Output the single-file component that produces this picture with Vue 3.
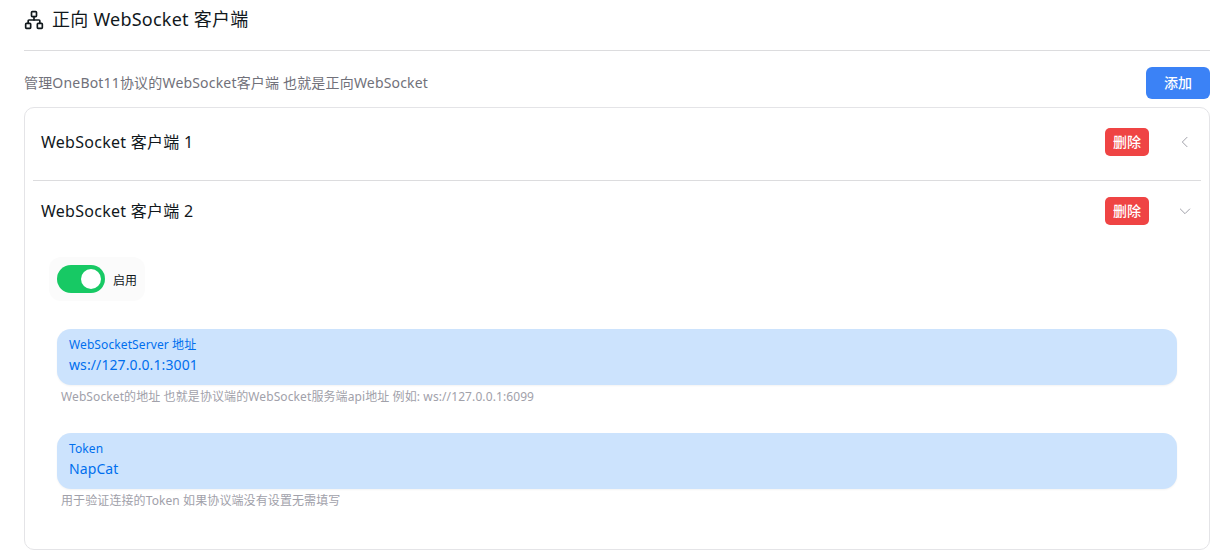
<script setup>
const clients = [
  { name: 'WebSocket 客户端 1', open: false },
  { name: 'WebSocket 客户端 2', open: true },
]
const fields = [
  { label: 'WebSocketServer 地址', value: 'ws://127.0.0.1:3001', hint: 'WebSocket的地址 也就是协议端的WebSocket服务端api地址 例如: ws://127.0.0.1:6099' },
  { label: 'Token', value: 'NapCat', hint: '用于验证连接的Token 如果协议端没有设置无需填写' },
]
</script>

<template>
  <div class="page">
    <div class="title">
      <svg class="title-icon" viewBox="0 0 24 24" fill="none" stroke="currentColor" stroke-width="2" stroke-linecap="round" stroke-linejoin="round">
        <rect x="9" y="2" width="6" height="6" rx="1" />
        <rect x="16" y="16" width="6" height="6" rx="1" />
        <rect x="2" y="16" width="6" height="6" rx="1" />
        <path d="M5 16v-3a1 1 0 0 1 1-1h12a1 1 0 0 1 1 1v3" />
        <path d="M12 12V8" />
      </svg>
      <span>正向 WebSocket 客户端</span>
    </div>
    <div class="desc-row">
      <span class="desc">管理OneBot11协议的WebSocket客户端 也就是正向WebSocket</span>
      <button class="btn-add">添加</button>
    </div>
    <div class="card">
      <div v-for="c in clients" :key="c.name" class="item">
        <div class="item-head">
          <span class="item-name">{{ c.name }}</span>
          <button class="btn-del">删除</button>
          <svg class="chevron" :class="{ open: c.open }" viewBox="0 0 24 24" fill="none" stroke="currentColor" stroke-width="1.5" stroke-linecap="round" stroke-linejoin="round">
            <path d="M15 5l-7 7 7 7" />
          </svg>
        </div>
        <div v-if="c.open" class="item-body">
          <div class="switch-wrap">
            <span class="switch"><span class="knob"></span></span>
            <span class="switch-label">启用</span>
          </div>
          <div v-for="f in fields" :key="f.label" class="field">
            <div class="input">
              <div class="input-label">{{ f.label }}</div>
              <div class="input-value">{{ f.value }}</div>
            </div>
            <div class="hint">{{ f.hint }}</div>
          </div>
        </div>
      </div>
    </div>
  </div>
</template>

<style>
html, body {
  margin: 0;
  background: #fff;
}
</style>

<style scoped>
.page {
  box-sizing: border-box;
  width: 1218px;
  height: 560px;
  padding: 0 8px 0 24px;
  overflow: hidden;
  font-family: "Noto Sans", "Noto Sans CJK SC", sans-serif;
  color: #11181c;
}
.title {
  height: 50px;
  display: flex;
  align-items: flex-start;
  gap: 8px;
  border-bottom: 1px solid #dcdcde;
  font-size: 18px;
  line-height: 39px;
  letter-spacing: 0.24px;
}
.title-icon {
  width: 20px;
  height: 20px;
  margin-top: 10px;
}
.desc-row {
  display: flex;
  align-items: center;
  justify-content: space-between;
  height: 32px;
  margin-top: 16px;
}
.desc {
  font-size: 14px;
  line-height: 20px;
  letter-spacing: 0.18px;
  color: #71717a;
}
button {
  border: none;
  font-family: inherit;
  font-weight: 500;
  color: #fff;
  padding: 0 0 2px;
}
.btn-add {
  width: 64px;
  height: 32px;
  border-radius: 6px;
  background: #3b82f6;
  font-size: 14px;
}
.card {
  box-sizing: border-box;
  height: 443px;
  margin-top: 8px;
  padding: 0 8px;
  border: 1px solid #e4e4e7;
  border-radius: 10px;
}
.item + .item {
  border-top: 1px solid #dcdcde;
}
.item-head {
  display: flex;
  align-items: center;
  height: 60px;
  padding: 0 8px;
}
.item:first-child .item-head {
  height: 68px;
  margin-bottom: 4px;
}
.item-name {
  flex: 1;
  margin-bottom: 2px;
  font-size: 16px;
  letter-spacing: 0.27px;
}
.btn-del {
  width: 44px;
  height: 28px;
  border-radius: 5px;
  background: #ef4444;
  font-size: 14px;
}
.chevron {
  width: 16px;
  height: 16px;
  margin-left: 28px;
  color: #a1a1aa;
}
.chevron.open {
  transform: rotate(-90deg);
}
.item-body {
  padding: 16px 24px 0 16px;
}
.switch-wrap {
  display: flex;
  align-items: center;
  gap: 8px;
  box-sizing: border-box;
  width: 96px;
  height: 44px;
  padding: 0 8px;
  border-radius: 12px;
  background: #fbfbfb;
}
.switch {
  display: flex;
  align-items: center;
  justify-content: flex-end;
  box-sizing: border-box;
  width: 48px;
  height: 28px;
  padding: 0 4px;
  border-radius: 14px;
  background: #17c964;
}
.knob {
  width: 20px;
  height: 20px;
  border-radius: 50%;
  background: #fff;
}
.switch-label {
  margin-top: 2px;
  font-size: 12px;
  color: #11181c;
}
.field {
  margin: 28px 0 0 8px;
}
.field + .field {
  margin-top: 26px;
}
.input {
  box-sizing: border-box;
  height: 56px;
  padding: 8px 12px;
  border-radius: 14px;
  background: #cce3fd;
  box-shadow: 0 1px 2px rgba(0, 0, 0, 0.05);
  color: #006fee;
}
.input-label {
  font-size: 12px;
  line-height: 16px;
  letter-spacing: 0.1px;
}
.input-value {
  font-size: 14px;
  line-height: 24px;
  letter-spacing: 0.1px;
}
.hint {
  padding: 2px 4px 0;
  font-size: 12px;
  line-height: 20px;
  letter-spacing: 0.1px;
  color: #a1a1aa;
}
</style>
